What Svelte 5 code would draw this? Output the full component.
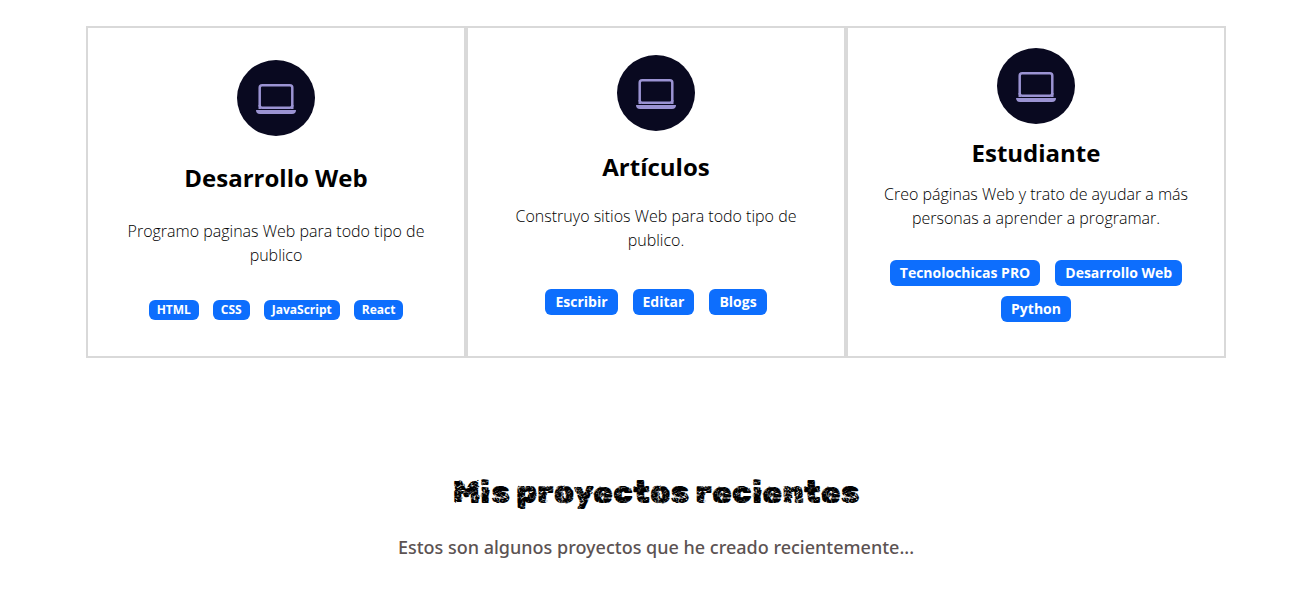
<script>
  const services = [
    {
      title: 'Desarrollo Web',
      text: 'Programo paginas Web para todo tipo de publico',
      tags: ['HTML', 'CSS', 'JavaScript', 'React'],
      small: true
    },
    {
      title: 'Artículos',
      text: 'Construyo sitios Web para todo tipo de publico.',
      tags: ['Escribir', 'Editar', 'Blogs']
    },
    {
      title: 'Estudiante',
      text: 'Creo páginas Web y trato de ayudar a más personas a aprender a programar.',
      tags: ['Tecnolochicas PRO', 'Desarrollo Web', 'Python']
    }
  ];
</script>

<main>
  <section class="services">
    {#each services as service}
      <article class="card">
        <span class="icon">
          <svg viewBox="0 0 40 40" aria-hidden="true">
            <rect x="3.700" y="7.200" width="32.600" height="22.600" rx="2.500" fill="none" stroke="currentColor" stroke-width="2.500" />
            <path d="M2.500 27h2.500v4h-2.500zM35 27h2.500v4h-2.500zM0 32h40a4 4 0 0 1-4 4H4a4 4 0 0 1-4-4z" fill="currentColor" />
          </svg>
        </span>
        <h2>{service.title}</h2>
        <p>{service.text}</p>
        <ul class="tags" class:small={service.small}>
          {#each service.tags as tag}
            <li>{tag}</li>
          {/each}
        </ul>
      </article>
    {/each}
  </section>

  <section class="projects">
    <h1>Mis proyectos recientes</h1>
    <p>Estos son algunos proyectos que he creado recientemente...</p>
  </section>
</main>

<style>
  :global(body) {
    margin: 0;
    background: #fff;
  }

  main {
    padding: 26px 0 32px 19px;
    color: #000;
    font-family: 'Segoe UI', 'Open Sans', 'Noto Sans', sans-serif;
  }

  .services {
    display: grid;
    grid-template-columns: repeat(3, 1fr);
    max-width: 1140px;
    margin: 0 auto;
  }

  .card {
    box-sizing: border-box;
    display: flex;
    flex-direction: column;
    align-items: center;
    justify-content: space-evenly;
    min-height: 332px;
    padding: 8px 32px 4px;
    border: 2px solid #d9d9d9;
    text-align: center;
  }

  .icon {
    display: flex;
    align-items: center;
    justify-content: center;
    width: 78px;
    height: 76px;
    border-radius: 50%;
    background: #090920;
    color: #9b93d3;
  }

  .icon svg {
    width: 40px;
    height: 40px;
  }

  h2 {
    margin: 0;
    font-size: 24px;
    line-height: 34px;
    font-weight: 700;
  }

  .card p {
    margin: 0;
    font-size: 16px;
    line-height: 24px;
    font-weight: 300;
  }

  .tags {
    display: flex;
    flex-wrap: wrap;
    justify-content: center;
    gap: 10px 15px;
    margin: 0;
    padding: 18px 0;
    list-style: none;
  }

  .tags li {
    padding: 0 10px;
    border-radius: 6px;
    background: #0d6efd;
    color: #fff;
    font-size: 14px;
    line-height: 26px;
    font-weight: 700;
  }

  .tags.small {
    gap: 10px 14px;
    padding: 8px 0;
  }

  .tags.small li {
    padding: 0 8px;
    font-size: 12px;
    line-height: 20px;
  }

  .projects {
    margin-top: 112px;
    text-align: center;
  }

  h1 {
    margin: 0;
    font-family: 'Rubik Distressed', Inter, sans-serif;
    font-size: 32px;
    line-height: 44px;
    font-weight: 400;
  }

  .projects p {
    margin: 19px 0 0;
    color: #5c5353;
    font-family: 'Segoe UI', 'Noto Sans', 'Open Sans', sans-serif;
    font-size: 18px;
    line-height: 28px;
    font-weight: 500;
  }
</style>
